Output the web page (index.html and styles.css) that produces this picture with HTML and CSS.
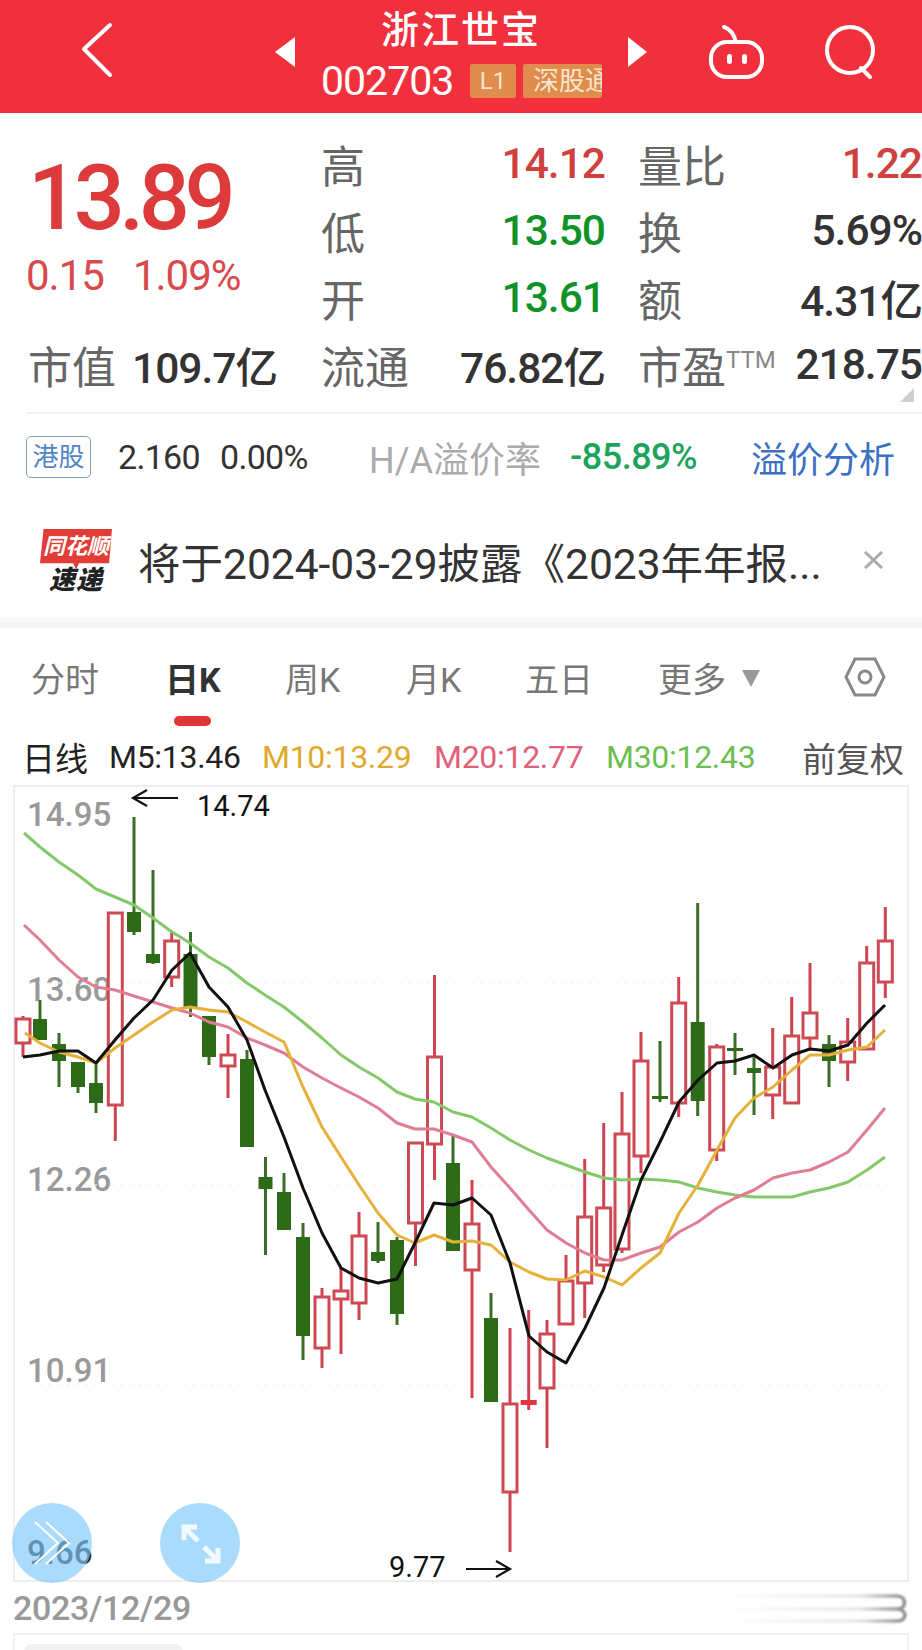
FILE: index.html
```html
<!DOCTYPE html>
<html lang="zh">

<head>
	<meta charset="utf-8">
	<title>浙江世宝 002703</title>
	<link rel="stylesheet" href="styles.css">
</head>

<body>
	<!-- red title bar -->
	<header class="topbar">
		<svg class="topbar-icons" viewBox="0 0 922 113" width="922" height="113">
			<path class="line-white" d="M110 25 84 49l26 26"/>
			<path class="fill-white" d="M295 37v30l-20-15zM628 37v30l19-15z"/>
			<path class="line-white" d="M724 27c6 2 10 7 12 15"/>
			<rect class="line-white" x="711" y="42" width="51" height="35" rx="16"/>
			<rect class="fill-white" x="727" y="54" width="5" height="10" rx="2.5"/>
			<rect class="fill-white" x="742" y="54" width="5" height="10" rx="2.5"/>
			<circle class="line-white" cx="850" cy="50" r="23"/>
			<path class="line-white" d="m861 68 9 9"/>
		</svg>
		<div class="stock-name">浙江世宝</div>
		<div class="stock-code-row">
			<span class="stock-code">002703</span>
			<span class="tag">L1</span>
			<span class="tag tag-clip"><span>深股通</span></span>
		</div>
	</header>

	<!-- quote block -->
	<section class="quote">
		<div class="price-cell">
			<div class="price">13.89</div>
			<div class="change"><span>0.15</span><span>1.09%</span></div>
		</div>
		<div class="cell"><span class="label">高</span><span class="val up">14.12</span></div>
		<div class="cell cell-last"><span class="label">量比</span><span class="val up">1.22</span></div>
		<div class="cell"><span class="label">低</span><span class="val down">13.50</span></div>
		<div class="cell cell-last"><span class="label">换</span><span class="val">5.69%</span></div>
		<div class="cell"><span class="label">开</span><span class="val down">13.61</span></div>
		<div class="cell cell-last"><span class="label">额</span><span class="val">4.31亿</span></div>
		<div class="cell cell-first"><span class="label">市值</span><span class="val">109.7亿</span></div>
		<div class="cell"><span class="label">流通</span><span class="val">76.82亿</span></div>
		<div class="cell cell-last"><span class="label">市盈<sup class="ttm">TTM</sup></span><span class="val">218.75</span></div>
		<i class="corner"></i>
	</section>

	<!-- hk row -->
	<section class="hk-row">
		<span class="hk-badge">港股</span>
		<span class="hk-num">2.160</span>
		<span class="hk-num">0.00%</span>
		<span class="hk-label">H/A溢价率</span>
		<span class="hk-rate">-85.89%</span>
		<span class="hk-link">溢价分析</span>
	</section>

	<!-- news row -->
	<section class="news">
		<div class="news-logo">
			<div class="news-logo-top">同花顺</div>
			<div class="news-logo-bottom">速递</div>
		</div>
		<div class="news-text">将于2024-03-29披露《2023年年报...</div>
		<svg class="news-close" viewBox="0 0 21 18" width="21" height="18"><path d="m2 1 17 16M19 1 2 17"/></svg>
	</section>

	<div class="band"></div>

	<!-- period tabs -->
	<nav class="tabs">
		<span class="tab">分时</span>
		<span class="tab tab-on">日K</span>
		<span class="tab">周K</span>
		<span class="tab">月K</span>
		<span class="tab">五日</span>
		<span class="tab">更多<i class="caret"></i></span>
		<svg class="gear" viewBox="0 0 42 40" width="42" height="40">
			<path d="M11 2h20l9 18-9 18H11L2 20z"/>
			<circle cx="21" cy="20" r="6"/>
		</svg>
	</nav>

	<!-- moving averages -->
	<div class="ma-row">
		<span class="ma-name">日线</span>
		<span class="ma ma5">M5:13.46</span>
		<span class="ma ma10">M10:13.29</span>
		<span class="ma ma20">M20:12.77</span>
		<span class="ma ma30">M30:12.43</span>
		<span class="ma-adjust">前复权</span>
	</div>

	<!-- k line chart, svg uses page coords -->
	<div class="chart">
		<span class="axis" style="top:11px">14.95</span>
		<span class="axis" style="top:186px">13.60</span>
		<span class="axis" style="top:376px">12.26</span>
		<span class="axis" style="top:567px">10.91</span>
		<span class="axis axis-dark" style="top:749px">9.66</span>

		<svg class="plot" viewBox="13 785 896 797" width="896" height="797">
			<path class="grid" d="M30 983H900M30 1185H900M30 1385H900"/>

			<path class="wick-red" d="M23 1016V1057M115.3 913V1141M171.7 932V987M228 1034V1098M322 1288V1368M341 1268V1354M359 1212V1320M415.5 1143V1266M434.5 975V1180M472 1180V1398M510 1328V1552M528.7 1310V1410M547 1320V1448M566 1255V1324M584.7 1159V1318M603.7 1123V1272M622 1092V1253M641 1032V1173M678.7 977V1117M716.7 1044V1161M772.7 1028V1119M791.7 997V1103M810 963V1050M847.7 1018V1081M866.7 946V1049M885.3 907V998"/>
			<path class="wick-green" d="M40 1000V1040M59 1033V1087M78 1062V1093M96 1063V1113M134 817V935M153 870V964M190.5 932V1017M209 1016V1065M247 1050V1147M265.5 1157V1255M284 1173V1230M303 1223V1360M378 1222V1263M397 1237V1325M453 1135V1251M491 1293V1402M660 1041V1102M697.7 903V1116M735 1033V1075M754 1057V1115M829 1035V1087"/>

			<path class="body-red" d="M16 1019h14v24h-14zM108.3 913h14v192h-14zM164.7 941h14v36h-14zM221 1055h14v11h-14zM315 1297h14v51h-14zM334 1291h14v8h-14zM352 1236h14v67h-14zM408.5 1143h14v80h-14zM427.5 1057h14v87h-14zM465 1224h14v46h-14zM503 1404h14v88h-14zM540 1334h14v54h-14zM559 1281h14v43h-14zM577.7 1217h14v66h-14zM596.7 1208h14v57h-14zM615 1134h14v115h-14zM634 1061h14v95h-14zM671.7 1003h14v100h-14zM709.7 1047h14v103h-14zM765.7 1067h14v28h-14zM784.7 1036h14v67h-14zM803 1013h14v25h-14zM840.7 1042h14v20h-14zM859.7 963h14v86h-14zM878.3 941h14v41h-14z"/>
			<path class="body-solid-red" d="M520.7 1400h16v5h-16z"/>
			<path class="body-green" d="M33 1019h14v21h-14zM52 1044h14v17h-14zM71 1062h14v25h-14zM89 1083h14v20h-14zM127 912h14v20h-14zM146 954h14v9h-14zM183.5 954h14v54h-14zM202 1016h14v41h-14zM240 1059h14v88h-14zM258.5 1177h14v12h-14zM277 1192h14v38h-14zM296 1237h14v99h-14zM371 1252h14v9h-14zM390 1240h14v74h-14zM446 1163h14v88h-14zM484 1318h14v84h-14zM652 1096h16v3h-16zM690.7 1022h14v79h-14zM727 1048h16v3h-16zM747 1068h14v5h-14zM822 1044h14v17h-14z"/>

			<polyline class="ma30-line" points="24,833 40,847 59,862 78,875 96,889 115,897 134,905 153,918 172,932 190,943 209,957 228,968 247,983 265,995 284,1007 303,1022 322,1038 341,1055 359,1067 378,1078 397,1092 415,1099 434,1102 453,1112 472,1117 491,1128 510,1140 529,1150 547,1158 566,1165 585,1172 604,1178 622,1180 641,1179 660,1180 679,1182 698,1188 717,1192 735,1195 754,1197 773,1197 792,1197 810,1192 829,1188 848,1182 867,1170 885,1157"/>
			<polyline class="ma20-line" points="24,925 40,940 59,960 78,977 96,987 115,990 134,996 153,1002 172,1008 190,1013 209,1022 228,1027 247,1038 265,1045 284,1053 303,1067 322,1078 341,1088 359,1097 378,1108 397,1123 415,1129 434,1129 453,1135 472,1142 491,1167 510,1188 529,1210 547,1230 566,1243 585,1253 604,1260 622,1260 641,1253 660,1247 679,1232 698,1222 717,1208 735,1198 754,1190 773,1178 792,1173 810,1170 829,1162 848,1152 867,1130 885,1108"/>
			<polyline class="ma10-line" points="25,1033 40,1043 59,1052 78,1057 96,1063 115,1048 134,1035 153,1022 172,1010 190,1007 209,1010 228,1012 247,1022 265,1032 284,1042 303,1087 322,1127 341,1157 359,1185 378,1213 397,1235 415,1243 434,1235 453,1242 472,1241 491,1245 510,1262 529,1272 547,1279 566,1280 585,1271 604,1277 622,1285 641,1268 660,1253 679,1213 698,1185 717,1150 735,1118 754,1098 773,1087 792,1070 810,1055 829,1055 848,1050 867,1047 885,1030"/>
			<polyline class="ma5-line" points="23,1057 40,1055 59,1051 78,1051 96,1063 115,1040 134,1018 153,1000 172,970 190,953 209,987 228,1007 247,1040 265,1090 284,1137 303,1188 322,1233 341,1268 359,1278 378,1283 397,1279 415,1243 434,1203 453,1205 472,1198 491,1215 510,1263 529,1336 547,1352 566,1363 585,1328 604,1288 622,1235 641,1180 660,1142 679,1102 698,1080 717,1063 735,1061 754,1055 773,1068 792,1055 810,1049 829,1051 848,1045 867,1023 885,1005"/>

			<path class="arrow" d="M178 798H134m13-8-14 8 14 8M466 1569h43m-13-8 14 8-14 8"/>
		</svg>

		<span class="mark" style="left:184px;top:4px">14.74</span>
		<span class="mark" style="left:376px;top:765px">9.77</span>

		<div class="round-btn round-left">
			<svg viewBox="0 0 80 80" width="80" height="80"><path d="m23 19 23 21-23 21M34 19l23 21-23 21"/></svg>
		</div>
		<div class="round-btn round-right">
			<svg viewBox="0 0 80 80" width="80" height="80"><path d="m24 24 14 14M24 37V24h13M44 44l14 14M58 45v13H45"/></svg>
		</div>
	</div>

	<div class="date-row">
		2023/12/29
		<svg class="blur-mark" viewBox="0 0 182 32" width="182" height="32">
			<defs>
				<linearGradient id="fade">
					<stop offset="0" stop-color="#fff"/>
					<stop offset=".75" stop-color="#e6e6e6"/>
					<stop offset="1" stop-color="#8a8a8a"/>
				</linearGradient>
			</defs>
			<path d="M2 4H170c10 0 10 13 0 13H2M170 17c11 1 10 12 0 12H2"/>
		</svg>
	</div>

	<div class="next-panel"><i class="next-pill"></i></div>
</body>

</html>
```

FILE: styles.css
```css
* {
    box-sizing: border-box;
}

body {
    margin: 0;
    width: 922px;
    height: 1650px;
    overflow: hidden;
    background: #fff;
    font-family: Roboto, "Noto Sans CJK SC", sans-serif;
    color: #333;
}

/* title bar */
.topbar {
    position: relative;
    height: 113px;
    background: #f1303d;
    color: #fff;
    text-align: center;
}

.topbar-icons {
    position: absolute;
    left: 0;
    top: 0;
}

.line-white {
    fill: none;
    stroke: #fff;
    stroke-width: 4;
    stroke-linecap: round;
    stroke-linejoin: round;
}

.fill-white {
    fill: #fff;
}

.stock-name {
    position: relative;
    padding-top: 7px;
    height: 64px;
    font-size: 38px;
    line-height: 46px;
    letter-spacing: 2px;
    font-weight: 500;
}

.stock-code-row {
    position: relative;
    display: flex;
    align-items: center;
    padding-left: 321px;
    height: 34px;
}

.stock-code {
    width: 149px;
    text-align: left;
    font-size: 41px;
    line-height: 34px;
    letter-spacing: -1px;
}

.tag {
    width: 46px;
    height: 34px;
    margin-right: 7px;
    border-radius: 2px;
    background: #df8c4c;
    color: #f8e6cf;
    font-size: 24px;
    line-height: 34px;
}

/* 深股通 is cut by its tag in the app as well */
.tag-clip {
    width: 79px;
    overflow: hidden;
    white-space: nowrap;
    text-align: left;
    padding-left: 10px;
}

.tag-clip span {
    font-size: 26px;
}

/* quote */
.quote {
    position: relative;
    display: grid;
    grid-template-columns: 293px 317px 284px;
    grid-auto-rows: 67px;
    padding: 17px 0 14px 28px;
    height: 299px;
}

.price-cell {
    grid-row: 1 / span 3;
    padding-top: 19px;
}

.price {
    font-size: 90px;
    line-height: 100px;
    font-weight: 500;
    letter-spacing: -5.5px;
    color: #dd3a3c;
}

.change {
    display: flex;
    gap: 29px;
    margin: 5px 0 0 -2px;
    font-size: 42px;
    line-height: 44px;
    letter-spacing: -1px;
    color: #d8494c;
}

.cell {
    display: flex;
    justify-content: space-between;
    align-items: center;
    padding-right: 33px;
    white-space: nowrap;
}

.cell-first {
    padding-right: 44px;
}

.cell-last {
    padding-right: 0;
}

.label {
    font-size: 44px;
    color: #666;
}

.ttm {
    font-size: 24px;
    vertical-align: 16px;
    line-height: 0;
    color: #888;
}

.val {
    font-size: 42.5px;
    font-weight: 500;
    letter-spacing: -1px;
    color: #333;
}

.up {
    color: #d0403f;
}

.down {
    color: #0f9328;
}

.corner {
    position: absolute;
    right: 8px;
    top: 275px;
    width: 14px;
    height: 14px;
    background: #cfcfcf;
    clip-path: polygon(100% 0, 100% 100%, 0 100%);
}

/* hk row */
.hk-row {
    display: grid;
    grid-template-columns: 92px 102px 149px 201px 183px 1fr;
    align-items: center;
    height: 88px;
    margin-left: 26px;
    border-top: 2px solid #f2f2f2;
    white-space: nowrap;
}

.hk-badge {
    width: 65px;
    height: 42px;
    border: 1px solid #7fa0bf;
    border-radius: 5px;
    text-align: center;
    font-size: 26px;
    line-height: 40px;
    color: #4f86c6;
}

.hk-num {
    font-size: 34px;
    letter-spacing: -.7px;
}

.hk-label {
    font-size: 36px;
    color: #aaa;
}

.hk-rate {
    font-size: 36px;
    font-weight: 500;
    letter-spacing: -.5px;
    color: #1ca45c;
}

.hk-link {
    font-size: 36px;
    margin-left: -2px;
    color: #3b70c2;
}

/* news */
.news {
    position: relative;
    display: flex;
    align-items: center;
    height: 117px;
    padding-top: 3px;
    padding-left: 40px;
}

.news-logo {
    width: 72px;
    height: 63px;
    text-align: center;
    font-style: italic;
}

.news-logo-top {
    height: 41px;
    padding-top: 1px;
    background: #e13c35;
    color: #fff;
    clip-path: polygon(5% 0, 100% 0, 96% 85%, 54% 85%, 50% 100%, 46% 85%, 0 85%);
    font-size: 22px;
    font-weight: 700;
    line-height: 33px;
}

.news-logo-bottom {
    height: 24px;
    margin-top: -3px;
    font-size: 26px;
    font-weight: 900;
    letter-spacing: 1px;
    line-height: 26px;
    color: #222;
}

.news-text {
    margin-left: 26px;
    font-size: 42.5px;
    color: #333;
    white-space: nowrap;
}

.news-close {
    position: absolute;
    left: 863px;
    top: 51px;
    fill: none;
    stroke: #aaa;
    stroke-width: 3;
}

.band {
    height: 11px;
    background: linear-gradient(#fafafa, #f2f2f2);
}

/* tabs */
.tabs {
    display: grid;
    grid-template-columns: 134px 120px 121px 119px 133px 186px 1fr;
    height: 103px;
    padding: 30px 0 0 31px;
    font-size: 34px;
    line-height: 44px;
    color: #777;
}

.tab {
    position: relative;
    white-space: nowrap;
}

.tab-on {
    font-weight: 700;
    color: #333;
}

.tab-on::after {
    content: "";
    position: absolute;
    left: 9px;
    top: 58px;
    width: 37px;
    height: 10px;
    border-radius: 5px;
    background: #e03535;
}

.caret {
    display: inline-block;
    width: 18px;
    height: 17px;
    margin-left: 16px;
    vertical-align: 5px;
    background: #999;
    clip-path: polygon(0 0, 100% 0, 50% 100%);
}

.gear {
    margin-top: -1px;
    fill: none;
    stroke: #888;
    stroke-width: 3;
}

/* ma row */
.ma-row {
    display: grid;
    grid-template-columns: 86px 153px 172px 172px 197px 1fr;
    align-items: center;
    height: 54px;
    padding: 0 0 2px 23px;
    font-size: 32px;
    white-space: nowrap;
}

.ma {
    letter-spacing: -.3px;
}

.ma-name {
    font-size: 33px;
    margin-left: -1px;
    color: #222;
}

.ma5 {
    color: #222;
}

.ma10 {
    color: #e0a92e;
}

.ma20 {
    color: #e0607a;
}

.ma30 {
    color: #6abf4f;
}

.ma-adjust {
    font-size: 34px;
    margin-left: -1px;
    color: #555;
}

/* chart */
.chart {
    position: relative;
    width: 896px;
    height: 797px;
    margin-left: 13px;
    box-shadow: inset 0 0 0 2px #eeeeee;
}

.axis {
    position: absolute;
    left: 14px;
    font-size: 33px;
    font-weight: 500;
    line-height: 38px;
    color: #999;
}

/* sits under the round button, so it has to be darker to read the same */
.axis-dark {
    color: #2f3034;
}

.plot {
    position: absolute;
    left: 0;
    top: 0;
}

.grid {
    fill: none;
    stroke: #f4f4f4;
    stroke-width: 1;
    stroke-dasharray: 4 5;
}

.wick-red,
.wick-green {
    fill: none;
    stroke-width: 3;
}

.wick-red {
    stroke: #cf4350;
}

.wick-green {
    stroke: #3b6d26;
}

.body-red {
    fill: #fff;
    stroke: #cd4a55;
    stroke-width: 3;
}

.body-solid-red {
    fill: #e5323c;
}

.body-green {
    fill: #2e6b18;
}

.ma5-line,
.ma10-line,
.ma20-line,
.ma30-line {
    fill: none;
    stroke-width: 3;
    stroke-linejoin: round;
}

.ma5-line {
    stroke: #111;
}

.ma10-line {
    stroke: #e6b13a;
}

.ma20-line {
    stroke: #df7d93;
}

.ma30-line {
    stroke: #84c86c;
}

.arrow {
    fill: none;
    stroke: #111;
    stroke-width: 2.2;
}

.mark {
    position: absolute;
    font-size: 29px;
    line-height: 34px;
    color: #111;
}

.round-btn {
    position: absolute;
    top: 718px;
    width: 80px;
    height: 80px;
    border-radius: 50%;
    background: rgba(125, 200, 250, .65);
}

.round-left {
    left: -1px;
}

.round-right {
    left: 147px;
}

.round-btn path {
    fill: none;
    stroke: #fff;
    stroke-width: 2;
}

.round-right path {
    stroke-width: 5;
    opacity: .85;
}

/* date */
.date-row {
    position: relative;
    height: 51px;
    padding-left: 13px;
    font-size: 34px;
    font-weight: 500;
    letter-spacing: -.3px;
    line-height: 52px;
    color: #999;
}

.blur-mark {
    position: absolute;
    left: 727px;
    top: 10px;
    fill: none;
    stroke: url(#fade);
    stroke-width: 3.5;
    filter: blur(.8px);
}

/* next panel is cut by the window */
.next-panel {
    height: 17px;
    margin-left: 13px;
    width: 896px;
    border-top: 2px solid #f0f0f0;
    border-left: 2px solid #f0f0f0;
    border-right: 2px solid #f0f0f0;
    padding: 9px 0 0 9px;
}

.next-pill {
    display: block;
    width: 159px;
    height: 10px;
    border-radius: 8px 8px 0 0;
    background: #f1f1f1;
}
```
